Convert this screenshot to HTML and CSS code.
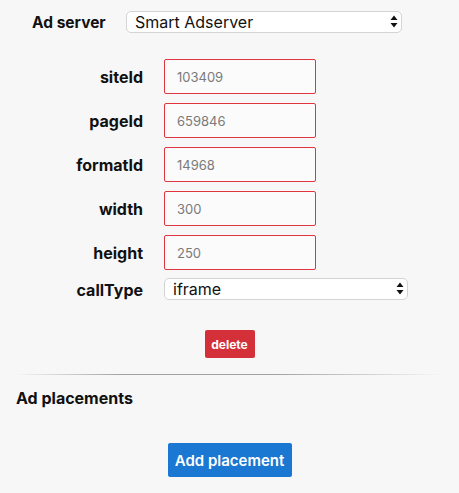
FILE: index.html
```html
<!DOCTYPE html>
<html>
<head>
<meta charset="utf-8">
<link rel="stylesheet" href="styles.css">
</head>
<body>
<div class="page">
  <div class="server-row">
    <label class="server-label">Ad server</label>
    <div class="select-wrap server-select">
      <select class="select"><option>Smart Adserver</option></select>
      <svg class="arrows" width="8" height="13" viewBox="0 0 8 13"><path d="M4 0.5 L7.5 5 L0.5 5 Z M4 12.5 L7.5 8 L0.5 8 Z" fill="#111"/></svg>
    </div>
  </div>

  <div class="form-grid">
    <label class="field-label">siteId</label>
    <input class="field-input" placeholder="103409">
    <label class="field-label">pageId</label>
    <input class="field-input" placeholder="659846">
    <label class="field-label">formatId</label>
    <input class="field-input" placeholder="14968">
    <label class="field-label">width</label>
    <input class="field-input" placeholder="300">
    <label class="field-label">height</label>
    <input class="field-input" placeholder="250">
    <label class="field-label">callType</label>
    <div class="select-wrap call-select">
      <select class="select"><option>iframe</option></select>
      <svg class="arrows" width="8" height="13" viewBox="0 0 8 13"><path d="M4 0.5 L7.5 5 L0.5 5 Z M4 12.5 L7.5 8 L0.5 8 Z" fill="#111"/></svg>
    </div>
  </div>

  <div class="center-row delete-row">
    <button class="btn-delete">delete</button>
  </div>

  <hr class="divider">

  <h3 class="section-title">Ad placements</h3>

  <div class="center-row add-row">
    <button class="btn-add">Add placement</button>
  </div>
</div>
</body>
</html>
```

FILE: styles.css
```css
html, body {
  margin: 0;
  padding: 0;
  background: #f7f7f7;
}
body {
  font-family: Inter, "Noto Sans", "Liberation Sans", sans-serif;
  color: #111;
}
.page {
  width: 459px;
  padding-top: 11px;
}
.server-row {
  display: flex;
  align-items: center;
  padding-left: 32px;
  gap: 22px;
}
.server-label {
  font-weight: 700;
  font-size: 15.5px;
  width: 72px;
  white-space: nowrap;
}
.select-wrap {
  position: relative;
  height: 22px;
}
.server-select { width: 276px; }
.call-select { width: 244px; }
.select {
  appearance: none;
  -webkit-appearance: none;
  box-sizing: border-box;
  width: 100%;
  height: 22px;
  border: 1px solid #d4d4d4;
  border-radius: 5px;
  background: #fff;
  font-family: inherit;
  font-size: 16px;
  color: #111;
  padding: 0 0 0 8px;
  line-height: 20px;
  margin: 0;
}
.arrows {
  position: absolute;
  right: 4px;
  top: 4px;
  pointer-events: none;
}
.form-grid {
  display: grid;
  grid-template-columns: 143px 152px;
  column-gap: 21px;
  row-gap: 9px;
  align-items: center;
  margin-top: 26px;
}
.field-label {
  text-align: right;
  font-weight: 700;
  font-size: 16px;
}
.field-input {
  box-sizing: border-box;
  width: 152px;
  height: 35px;
  border: 1px solid #e0353f;
  border-radius: 2px;
  background: #fbfbfb;
  padding: 0 12px;
  font-family: inherit;
  font-size: 13px;
  margin: 0;
  outline: none;
}
.field-input::placeholder {
  color: #7a7a7a;
}
.form-grid .call-select {
  margin-top: -1px;
}
.center-row {
  display: flex;
  justify-content: center;
}
.delete-row {
  margin-top: 30px;
}
.btn-delete {
  background: #d3303a;
  color: #fff;
  border: none;
  border-radius: 2px;
  font-family: inherit;
  font-weight: 700;
  font-size: 12px;
  width: 50px;
  height: 28px;
  padding: 0;
}
.divider {
  border: none;
  height: 1px;
  margin: 16px 16px 0 16px;
  background: linear-gradient(to right, rgba(0,0,0,0), rgba(0,0,0,0.35) 25%, rgba(0,0,0,0.35) 60%, rgba(0,0,0,0));
}
.section-title {
  margin: 14px 0 0 16px;
  font-size: 16px;
  font-weight: 700;
  line-height: 18px;
}
.add-row {
  margin-top: 36px;
}
.btn-add {
  background: #1a77d2;
  color: #fff;
  border: none;
  border-radius: 2px;
  font-family: inherit;
  font-weight: 600;
  font-size: 15px;
  width: 124px;
  height: 34px;
  padding: 0;
}
```
